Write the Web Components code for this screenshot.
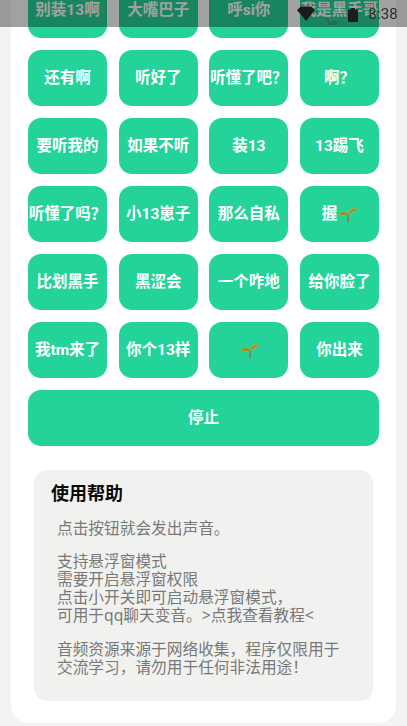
<!DOCTYPE html>
<html>
<head>
<meta charset="utf-8">
<style>
html, body { margin: 0; padding: 0; height: 100%; overflow: hidden; background: #f3f3f1; }
body { font-family: Roboto, "Noto Sans CJK SC", sans-serif; }
</style>
</head>
<body>
<status-bar time="8:38"></status-bar>
<soundboard-card>
	<sound-button>别装13啊</sound-button>
	<sound-button>大嘴巴子</sound-button>
	<sound-button>呼si你</sound-button>
	<sound-button>我是黑手哥</sound-button>
	<sound-button>还有啊</sound-button>
	<sound-button>听好了</sound-button>
	<sound-button>听懂了吧？</sound-button>
	<sound-button>啊？</sound-button>
	<sound-button>要听我的</sound-button>
	<sound-button>如果不听</sound-button>
	<sound-button>装13</sound-button>
	<sound-button>13踢飞</sound-button>
	<sound-button>听懂了吗？</sound-button>
	<sound-button>小13崽子</sound-button>
	<sound-button>那么自私</sound-button>
	<sound-button>握<sprout-icon></sprout-icon></sound-button>
	<sound-button>比划黑手</sound-button>
	<sound-button>黑涩会</sound-button>
	<sound-button>一个咋地</sound-button>
	<sound-button>给你脸了</sound-button>
	<sound-button>我tm来了</sound-button>
	<sound-button>你个13样</sound-button>
	<sound-button><sprout-icon></sprout-icon></sound-button>
	<sound-button>你出来</sound-button>
	<sound-button slot="stop">停止</sound-button>
	<help-box slot="help" title="使用帮助">
		<p>点击按钮就会发出声音。</p>
		<p>支持悬浮窗模式<br>需要开启悬浮窗权限<br>点击小开关即可启动悬浮窗模式，<br>可用于qq聊天变音。&gt;点我查看教程&lt;</p>
		<p>音频资源来源于网络收集，程序仅限用于交流学习，请勿用于任何非法用途！</p>
	</help-box>
</soundboard-card>
<script>
class StatusBar extends HTMLElement {
	connectedCallback() {
		const root = this.attachShadow({ mode: 'open' });
		root.innerHTML = `
<style>
:host {
	position: fixed;
	top: 0;
	left: 0;
	right: 0;
	height: 27px;
	z-index: 10;
	display: flex;
	align-items: center;
	justify-content: flex-end;
	padding-right: 9px;
	box-sizing: border-box;
	background: rgba(0,0,0,0.37);
	backdrop-filter: blur(0.7px);
	color: #2c2c2c;
	font: 400 15px Roboto, sans-serif;
}
svg { display: block; }
.wifi { margin-right: 8px; }
.signal { margin: 13px 11px 0 0; }
.battery { margin: 3px 10px 0 0; }
.time { letter-spacing: 0.2px; }
</style>
<svg class="wifi" width="18" height="15" viewBox="0 0 18 15"><path d="M0 4 4 .5h10L18 4 9 15z" fill="#1a1a1a"/></svg>
<svg class="signal" width="14" height="10" viewBox="0 0 14 10"><path d="M0 0 7 6H14V10H6z" fill="#3a3a3a" opacity=".3"/></svg>
<svg class="battery" width="10" height="14" viewBox="0 0 10 14"><path d="M3 0h4v1.500h3V14H0V1.500h3z" fill="#1c1c1c"/></svg>
<span class="time">${this.getAttribute('time')}</span>`;
	}
}

class SoundboardCard extends HTMLElement {
	constructor() {
		super();
		this.attachShadow({ mode: 'open' }).innerHTML = `
<style>
:host {
	display: block;
	box-sizing: border-box;
	margin: -50px 11px 0;
	height: 773px;
	padding: 32px 17px 0;
	background: #fff;
	border-radius: 18px;
}
.grid {
	display: grid;
	grid-template-columns: repeat(4, 79px);
	justify-content: space-between;
	grid-auto-rows: 56px;
	row-gap: 12px;
}
.stop {
	display: block;
	margin-top: 12px;
}
.help {
	display: block;
	margin: 24px 6px 0;
}
</style>
<div class="grid"><slot></slot></div>
<div class="stop"><slot name="stop"></slot></div>
<div class="help"><slot name="help"></slot></div>`;
	}
}

class SoundButton extends HTMLElement {
	constructor() {
		super();
		this.attachShadow({ mode: 'open' }).innerHTML = `
<style>
:host {
	display: flex;
	align-items: center;
	justify-content: center;
	height: 56px;
	border-radius: 13px;
	background: #24d399;
	color: #fff;
	font: 700 15.5px/20px Roboto, "Noto Sans CJK SC", sans-serif;
	white-space: nowrap;
	overflow: hidden;
	user-select: none;
	cursor: pointer;
}
</style>
<slot></slot>`;
	}
}

class SproutIcon extends HTMLElement {
	constructor() {
		super();
		this.attachShadow({ mode: 'open' }).innerHTML = `
<style>
:host { display: inline-block; width: 19px; height: 17px; margin-left: 1px; vertical-align: middle; }
svg { display: block; }
</style>
<svg width="19" height="17" viewBox="0 0 19 17">
	<path d="M9.500 7C10.300 10 10.300 13 10 16.500" fill="none" stroke="#7b8a5a" stroke-width="2"/>
	<path d="M9.800 8.500C7 10.500 2 10.300.5 8 1.500 5 7 4.300 9.800 8.500z" fill="#a9a534"/>
	<path d="M9 7.500C10.500 3.300 15.500 1 18.500 2.300 18.500 5.500 13 9 9 7.500z" fill="#b5a834"/>
	<path d="M2.500 8C5 7 7.500 7.200 9 8.300M11 6.700C13.500 5.200 15.500 4.300 17.500 3.300" fill="none" stroke="#66702a" stroke-width=".8"/>
</svg>`;
	}
}

class HelpBox extends HTMLElement {
	constructor() {
		super();
		this.attachShadow({ mode: 'open' }).innerHTML = `
<style>
:host {
	display: block;
	box-sizing: border-box;
	height: 231px;
	padding: 12px 17px 0;
	background: #f1f2f0;
	border-radius: 13px;
	font-family: "Noto Sans", "Noto Sans CJK SC", sans-serif;
}
h2 {
	margin: 0 0 15px;
	font-size: 18px;
	line-height: 22px;
	font-weight: 700;
	color: #0b0b0b;
}
.body {
	padding: 0 10px 0 6px;
	font-size: 15.700px;
	line-height: 18px;
	color: #787878;
}
::slotted(p) {
	margin: 0 0 16px;
}
::slotted(p:first-child) {
	margin-bottom: 15px;
}
</style>
<h2></h2>
<div class="body"><slot></slot></div>`;
		this.shadowRoot.querySelector('h2').textContent = this.getAttribute('title');
	}
}

customElements.define('status-bar', StatusBar);
customElements.define('soundboard-card', SoundboardCard);
customElements.define('sound-button', SoundButton);
customElements.define('sprout-icon', SproutIcon);
customElements.define('help-box', HelpBox);
</script>
</body>
</html>
